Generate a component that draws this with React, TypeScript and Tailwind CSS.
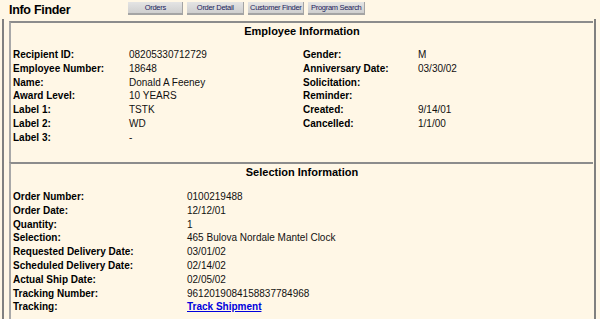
const font = { fontFamily: '"Liberation Sans", Arial, sans-serif' };

const employeeLeft: [string, string][] = [
  ['Recipient ID:', '08205330712729'],
  ['Employee Number:', '18648'],
  ['Name:', 'Donald A Feeney'],
  ['Award Level:', '10 YEARS'],
  ['Label 1:', 'TSTK'],
  ['Label 2:', 'WD'],
  ['Label 3:', '-'],
];

const employeeRight: [string, string][] = [
  ['Gender:', 'M'],
  ['Anniversary Date:', '03/30/02'],
  ['Solicitation:', ''],
  ['Reminder:', ''],
  ['Created:', '9/14/01'],
  ['Cancelled:', '1/1/00'],
];

const selection: [string, string][] = [
  ['Order Number:', '0100219488'],
  ['Order Date:', '12/12/01'],
  ['Quantity:', '1'],
  ['Selection:', '465 Bulova Nordale Mantel Clock'],
  ['Requested Delivery Date:', '03/01/02'],
  ['Scheduled Delivery Date:', '02/14/02'],
  ['Actual Ship Date:', '02/05/02'],
  ['Tracking Number:', '9612019084158837784968'],
];

const navButtons = [
  { label: 'Orders', width: 'w-[55px]' },
  { label: 'Order Detail', width: 'w-[57px]' },
  { label: 'Customer Finder', width: 'w-[56px]' },
  { label: 'Program Search', width: 'w-[57px]' },
];

const NavButton: React.FC<{ label: string; width: string }> = ({ label, width }) => (
  <button
    className={`${width} h-[13px] bg-gradient-to-b from-[#e4e4e4] to-[#cfcfcf] border-b-2 border-r border-[#a4a4a4] text-[7.5px] leading-[11px] text-[#1c1c5c] tracking-[-0.3px] whitespace-nowrap`}
  >
    {label}
  </button>
);

const Row: React.FC<{ label: string; value: string; labelWidth: string }> = ({
  label,
  value,
  labelWidth,
}) => (
  <div className="flex h-[13.8px] leading-[13.8px] text-[10px]">
    <span className={`${labelWidth} font-bold shrink-0`}>{label}</span>
    <span className="text-[#111]">{value}</span>
  </div>
);

export default function App() {
  return (
    <div style={font} className="w-[600px] h-[319px] overflow-hidden bg-[#fff7e6] text-black">
      <div className="flex items-start h-[19px]">
        <div className="pl-[9px] pt-[3px] text-[12.5px] leading-[14px] font-bold tracking-[-0.3px]">
          Info Finder
        </div>
        <div className="flex gap-[4px] ml-[58px] pt-[2px]">
          {navButtons.map((b) => (
            <NavButton key={b.label} label={b.label} width={b.width} />
          ))}
        </div>
      </div>

      <div className="ml-[2px] w-[594px] h-[300px] border-l-2 border-r-2 border-[#808080] pl-[5px] pr-[1px] pt-[2px]">
        <div className="border-t-2 border-l-2 border-t-[#8c8c8c] border-l-[#a8a8a8] h-[141px]">
          <div className="text-center text-[11px] font-bold leading-[14px] pt-[1px]">
            Employee Information
          </div>
          <div className="flex pl-[2px] pt-[10px]">
            <div className="w-[290px]">
              {employeeLeft.map(([l, v]) => (
                <Row key={l} label={l} value={v} labelWidth="w-[116px]" />
              ))}
            </div>
            <div>
              {employeeRight.map(([l, v]) => (
                <Row key={l} label={l} value={v} labelWidth="w-[115px]" />
              ))}
            </div>
          </div>
        </div>

        <div className="border-t-2 border-l-2 border-t-[#8c8c8c] border-l-[#a8a8a8] h-[160px]">
          <div className="text-center text-[11px] font-bold leading-[14px] pt-[1px]">
            Selection Information
          </div>
          <div className="pl-[2px] pt-[11px]">
            {selection.map(([l, v]) => (
              <Row key={l} label={l} value={v} labelWidth="w-[174px]" />
            ))}
            <div className="flex h-[13.8px] leading-[13.8px] text-[10px]">
              <span className="w-[174px] font-bold shrink-0">Tracking:</span>
              <a href="#" className="font-bold text-[#0000dd] underline">
                Track Shipment
              </a>
            </div>
          </div>
        </div>
      </div>
    </div>
  );
}
